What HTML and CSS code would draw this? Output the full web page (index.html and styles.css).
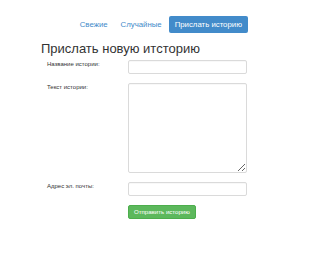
FILE: index.html
```html
<!DOCTYPE html>
<html lang="ru">
<head>
<meta charset="utf-8">
<title>Прислать новую историю</title>
<link rel="stylesheet" href="styles.css">
</head>
<body>
<div class="page">
  <nav class="nav">
    <a class="nav-link" href="#">Свежие</a>
    <a class="nav-link" href="#">Случайные</a>
    <a class="nav-link active" href="#">Прислать историю</a>
  </nav>
  <h3 class="title">Прислать новую итсторию</h3>
  <form class="form">
    <label class="label" for="name">Название истории:</label>
    <input class="control" id="name" type="text">
    <label class="label" for="text">Текст истории:</label>
    <textarea class="control area" id="text"></textarea>
    <label class="label" for="email">Адрес эл. почты:</label>
    <input class="control" id="email" type="email">
    <span></span>
    <div class="actions"><button class="submit" type="submit">Отправить историю</button></div>
  </form>
</div>
</body>
</html>
```

FILE: styles.css
```css
html, body {
  margin: 0;
  padding: 0;
  background: #fff;
}
body {
  font-family: "Liberation Sans", Arial, sans-serif;
  color: #333;
}
.page {
  padding: 16px 0 0 41px;
}
.nav {
  display: flex;
  justify-content: flex-end;
  align-items: center;
  gap: 1px;
  width: 207px;
}
.nav-link {
  display: block;
  height: 17px;
  line-height: 17px;
  padding: 0 6px;
  font-size: 7.8px;
  color: #428bca;
  text-decoration: none;
  border-radius: 2px;
}
.nav-link.active {
  background: #428bca;
  color: #fff;
}
.title {
  margin: 9px 0 0 0;
  font-size: 13px;
  line-height: 14px;
  font-weight: 400;
  color: #333;
}
.form {
  display: grid;
  grid-template-columns: 81px 119px;
  row-gap: 9px;
  margin: 4px 0 0 6px;
}
.label {
  font-size: 6px;
  line-height: 8px;
  color: #333;
}
.control {
  display: block;
  box-sizing: border-box;
  width: 119px;
  height: 14px;
  margin: 0;
  padding: 0 3px;
  border: 1px solid #dadada;
  border-radius: 2px;
  background: #fff;
  font-family: inherit;
  font-size: 6px;
  outline: none;
  box-shadow: inset 0 1px 1px rgba(0,0,0,0.03);
}
.area {
  height: 90px;
  resize: both;
}
.actions {
  display: flex;
}
.submit {
  box-sizing: border-box;
  height: 14px;
  padding: 0 5px;
  border: 1px solid #4cae4c;
  border-radius: 2px;
  background: #5cb85c;
  color: #fff;
  font-family: inherit;
  font-size: 6.1px;
  line-height: 12px;
}
```
